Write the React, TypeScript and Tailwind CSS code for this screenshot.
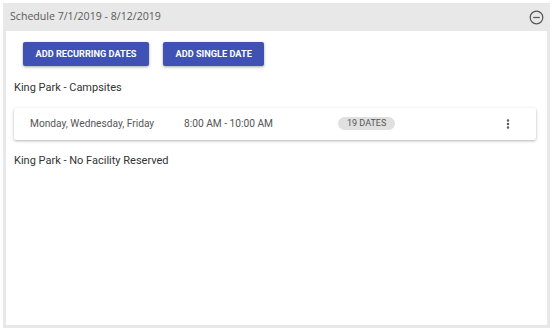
import { MoreVertical } from 'lucide-react'

function MinusCircle() {
  return (
    <svg width="15" height="15" viewBox="0 0 15 15" fill="none" stroke="#555" strokeWidth="1.2">
      <circle cx="7.5" cy="7.5" r="6.3" />
      <line x1="4.2" y1="7.5" x2="10.8" y2="7.5" />
    </svg>
  )
}

export default function App() {
  return (
    <div className="w-[553px] h-[332px] bg-white p-[3px] font-['Roboto',sans-serif]">
      <div className="flex flex-col h-[325px] w-[547px] bg-[#e8e8e8] px-[3px] pb-[3px]">
        <div className="flex items-center justify-between h-[28px] pl-[4px] pr-[3px]">
          <span className="font-['Open_Sans',sans-serif] text-[10.6px] text-[#5a5a5a]">Schedule 7/1/2019 - 8/12/2019</span>
          <MinusCircle />
        </div>

        <div className="flex-1 bg-white pt-[11px] px-[8px]">
          <div className="flex gap-[14px] pl-[9px]">
            <button className="h-[24px] px-[12.5px] rounded-[2px] bg-[#3f51b5] text-white text-[9.2px] font-bold shadow-[0_1px_3px_rgba(0,0,0,0.35)]">
              ADD RECURRING DATES
            </button>
            <button className="h-[24px] px-[12.5px] rounded-[2px] bg-[#3f51b5] text-white text-[9.2px] font-bold shadow-[0_1px_3px_rgba(0,0,0,0.35)]">
              ADD SINGLE DATE
            </button>
          </div>

          <p className="mt-[14px] text-[11px] text-[#333]">King Park - Campsites</p>

          <div className="mt-[11px] flex items-center h-[32px] mr-[3px] bg-white rounded-[2px] shadow-[0_1px_3px_rgba(0,0,0,0.3)] text-[10.2px] text-[#555]">
            <span className="w-[170px] pl-[16px]">Monday, Wednesday, Friday</span>
            <span className="w-[154px]">8:00 AM - 10:00 AM</span>
            <span className="h-[13px] px-[9px] flex items-center rounded-full bg-[#e0e0e0] text-[9px] text-[#555]">19 DATES</span>
            <div className="ml-auto mr-[22px] text-[#555]">
              <MoreVertical size={12} strokeWidth={3} />
            </div>
          </div>

          <p className="mt-[13px] text-[11px] text-[#333]">King Park - No Facility Reserved</p>
        </div>
      </div>
    </div>
  )
}
